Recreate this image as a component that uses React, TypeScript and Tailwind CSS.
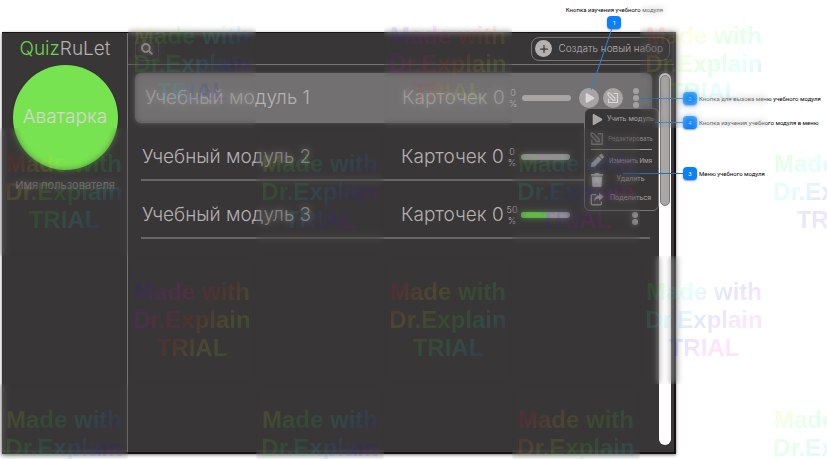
import React from "react";
import { FaPen, FaPlay, FaSearch, FaTrash } from "react-icons/fa";
import { FaPlus } from "react-icons/fa6";

type Module = { name: string; cards: number; percent: number; active?: boolean };

const modules: Module[] = [
  { name: "Учебный модуль 1", cards: 0, percent: 0, active: true },
  { name: "Учебный модуль 2", cards: 0, percent: 0 },
  { name: "Учебный модуль 3", cards: 0, percent: 50 },
];

const notes = [
  { id: 2, text: "Кнопка для вызова меню учебного модуля", line: "w-[42px]", gap: "mt-[60px]" },
  { id: 4, text: "Кнопка изучения учебного модуля в меню", line: "w-[28px]", gap: "mt-[11px]" },
  { id: 3, text: "Меню учебного модуля", line: "w-[60px]", gap: "mt-[38px]" },
];

/* Starting hue of every watermark tile, keyed by "column-row". */
const tileHues: Record<string, number> = {
  "1-0": 0, "3-0": 190, "5-0": 300,
  "0-1": 300, "2-1": 15, "4-1": 50, "6-1": 60,
  "1-2": 190, "3-2": 290, "5-2": 60,
  "0-3": 10, "2-3": 10, "4-3": 285, "6-3": 20,
};

function EditIcon({ className }: { className: string }) {
  return (
    <svg viewBox="0 0 16 16" className={className} fill="none" stroke="currentColor" strokeWidth="1.5" strokeLinejoin="round" strokeLinecap="round" aria-hidden="true">
      <path d="M9.500 2H14v12H2V9.500" />
      <path d="M1.200 1.200l2.600.4 6.700 6.700V11H8L1.500 4.200z" />
    </svg>
  );
}

function ShareIcon({ className }: { className: string }) {
  return (
    <svg viewBox="0 0 16 16" className={className} aria-hidden="true">
      <path d="M7 3H2.500a1 1 0 0 0-1 1v9.500a1 1 0 0 0 1 1H12a1 1 0 0 0 1-1V11" fill="none" stroke="currentColor" strokeWidth="1.600" />
      <path d="M10.500 1l5 4.500-5 4.500V7.300C7.500 7.200 6 8.500 5 11c-.3-4 1.500-7 5.500-7.300z" fill="currentColor" />
    </svg>
  );
}

function MenuItem({ icon, label, size }: { icon: React.ReactNode; label: string; size: string }) {
  return (
    <li>
      <button type="button" className="flex h-[19px] w-full items-center gap-0.5 whitespace-nowrap">
        <span className="flex w-4 shrink-0 justify-center">{icon}</span>
        <span className={`flex-1 text-center ${size}`}>{label}</span>
      </button>
    </li>
  );
}

function ModuleMenu() {
  return (
    <ul className="absolute top-6 -right-5 z-10 w-[75px] rounded-md border border-[#777474] bg-[#393637] px-1 pt-px pb-0.5 text-[#aaa6a6]">
      <MenuItem icon={<FaPlay className="size-[11px]" />} label="Учить модуль" size="text-[7px]" />
      <MenuItem icon={<EditIcon className="size-[14px] text-[#858181]" />} label="Редактировать" size="text-[6px] text-[#918d8d]" />
      <li className="mx-0.5 my-px border-t border-[#9b9797]" />
      <MenuItem icon={<FaPen className="size-[13px]" />} label="Изменить Имя" size="text-[6px]" />
      <MenuItem icon={<FaTrash className="size-[14px]" />} label="Удалить" size="text-[7px]" />
      <MenuItem icon={<ShareIcon className="size-[14px]" />} label="Поделиться" size="text-[7px]" />
    </ul>
  );
}

function ModuleRow({ module }: { module: Module }) {
  const box = module.active
    ? "rounded-md bg-[#727070] pl-2.5 pr-[13px] shadow-[0_0_3px_#5a5757]"
    : "ml-1.5 mr-0.5 border-b-2 border-[#696666] pl-px pr-3 pt-1";
  return (
    <li className={`flex h-[50px] items-center ${box}`}>
      <span className="flex-1 whitespace-nowrap text-[19px] font-light leading-6">{module.name}</span>
      <span className="w-[107px] whitespace-nowrap text-[19px] font-light leading-6">Карточек {module.cards}</span>
      <span className="flex w-2 flex-col items-center text-[9px] leading-[11px] font-light">
        <span>{module.percent}</span>
        <span>%</span>
      </span>
      <span role="progressbar" aria-valuenow={module.percent} className="ml-[5px] block h-1.5 w-[49px] overflow-hidden rounded-full bg-[#a8a4a4]">
        <span className="block h-full bg-[#6cd64a]" style={{ width: `${module.percent}%` }} />
      </span>
      <span className="ml-2 flex w-11 gap-1">
        {module.active && (
          <>
            <button type="button" aria-label="Учить" className="flex size-5 items-center justify-center rounded-full bg-[#a8a4a4] pl-0.5 text-[#dad7d7]">
              <FaPlay className="size-[10px]" />
            </button>
            <button type="button" aria-label="Редактировать" className="flex size-5 items-center justify-center rounded-full bg-[#a8a4a4] text-[#dad7d7]">
              <EditIcon className="size-3" />
            </button>
          </>
        )}
      </span>
      <span className="relative ml-2.5">
        <button type="button" aria-label="Меню" className="flex flex-col items-center gap-px py-1">
          <i className="size-1.5 rounded-full bg-[#a5a1a1]" />
          <i className="size-1.5 rounded-full bg-[#a5a1a1]" />
          <i className="size-1.5 rounded-full bg-[#a5a1a1]" />
        </button>
        {module.active && <ModuleMenu />}
      </span>
    </li>
  );
}

function Badge({ id }: { id: number }) {
  return (
    <span className="flex h-[13px] w-3.5 shrink-0 items-center justify-center rounded bg-[#0a80fb] text-[6px] text-white shadow-[0_1px_2px_#00000066]">
      {id}
    </span>
  );
}

function Watermark() {
  const cells = Array.from({ length: 28 }, (_, i) => `${i % 7}-${Math.floor(i / 7)}`);
  return (
    <div className="pointer-events-none absolute inset-0 z-30 grid auto-rows-[128px] grid-cols-[repeat(7,128px)] overflow-hidden" aria-hidden="true">
      {cells.map((key) => {
        const hue = tileHues[key];
        if (hue === undefined) return <div key={key} />;
        const stops = [0, 60, 120, 180, 240, 300, 360].map((s) => `hsl(${(hue + s) % 360} 100% 50%)`);
        return (
          <div key={key} className="grid">
            <div className="col-start-1 row-start-1 opacity-50 backdrop-blur-[3px]" />
            <div
              className="col-start-1 row-start-1 bg-clip-text pt-[22px] text-center font-['Liberation_Sans',Arial,sans-serif] text-[24px] leading-[28px] font-bold whitespace-nowrap text-transparent opacity-10"
              style={{ backgroundImage: `linear-gradient(135deg, ${stops.join(",")})` }}
            >
              Made with
              <br />
              Dr.Explain
              <br />
              TRIAL
            </div>
          </div>
        );
      })}
    </div>
  );
}

export default function App() {
  return (
    <div className="relative flex min-h-screen flex-col overflow-hidden bg-white pb-[5px] pl-0.5 font-['Inter',sans-serif]">
      <div className="relative z-20 flex h-8 justify-end pr-[164px] font-['Roboto',sans-serif] text-[6px] text-black">
        <div className="relative flex flex-col items-center gap-px pt-1">
          <span className="leading-[11px]">Кнопка изучения учебного модуля</span>
          <Badge id={1} />
          <svg className="absolute top-7 left-1/2 -ml-6 h-[63px] w-6" viewBox="0 0 24 63" aria-hidden="true">
            <path d="M22 0L1 62" stroke="#2f83d6" fill="none" />
          </svg>
        </div>
      </div>

      <div className="flex flex-1">
        <main className="flex flex-1 border-t border-r-2 border-b-2 border-[#151314] bg-[#393637] text-[#b5b1b1] shadow-[0_1px_3px_#00000088]">
          <aside className="flex w-[126px] shrink-0 flex-col items-center border-r border-[#777474] pt-1 pl-px">
            <h1 className="text-[19px] leading-6 font-light">
              <span className="text-[#6cd64a]">Quiz</span>RuLet
            </h1>
            <div className="mt-1 flex size-[105px] items-center justify-center rounded-full bg-[#78e351] text-[19px] font-light text-[#d8d5d5] shadow-[0_1px_3px_#00000044]">
              Аватарка
            </div>
            <p className="mt-[7px] text-[11px] leading-4 text-[#8b8787]">Имя пользователя</p>
          </aside>

          <section className="flex min-w-0 flex-1 flex-col">
            <header className="flex h-8 items-center justify-between border-b border-[#777474] pr-1 pl-[7px]">
              <button type="button" aria-label="Поиск" className="flex size-6 items-center justify-center rounded-md border border-[#555252]">
                <FaSearch className="size-3" />
              </button>
              <button type="button" className="flex h-6 items-center gap-1.5 rounded-lg border border-[#777474] pr-1.5 pl-[3px] text-[10px] font-light whitespace-nowrap">
                <span className="flex size-[17px] items-center justify-center rounded-full bg-[#b5b1b1] text-[#393637]">
                  <FaPlus className="size-[10px]" />
                </span>
                Создать новый набор
              </button>
            </header>
            <div className="flex flex-1 gap-[7px] pt-2 pr-[3px] pb-[7px] pl-[7px]">
              <ul className="flex flex-1 flex-col gap-2">
                {modules.map((m) => (
                  <ModuleRow key={m.name} module={m} />
                ))}
              </ul>
              <div className="w-3 rounded-full bg-white px-px py-0.5">
                <div className="h-[131px] rounded-full border border-[#777474] bg-[#aaa6a6]" />
              </div>
            </div>
          </section>
        </main>

        <aside className="relative z-20 w-[151px] shrink-0 pl-[7px] font-['Roboto',sans-serif] text-[6px] text-black">
          {notes.map((n) => (
            <div key={n.id} className={`relative flex h-[13px] items-center gap-0.5 whitespace-nowrap ${n.gap}`}>
              <i className={`absolute right-full h-px bg-[#2471b8] ${n.line}`} />
              <Badge id={n.id} />
              <span>{n.text}</span>
            </div>
          ))}
        </aside>
      </div>
      <Watermark />
    </div>
  );
}
